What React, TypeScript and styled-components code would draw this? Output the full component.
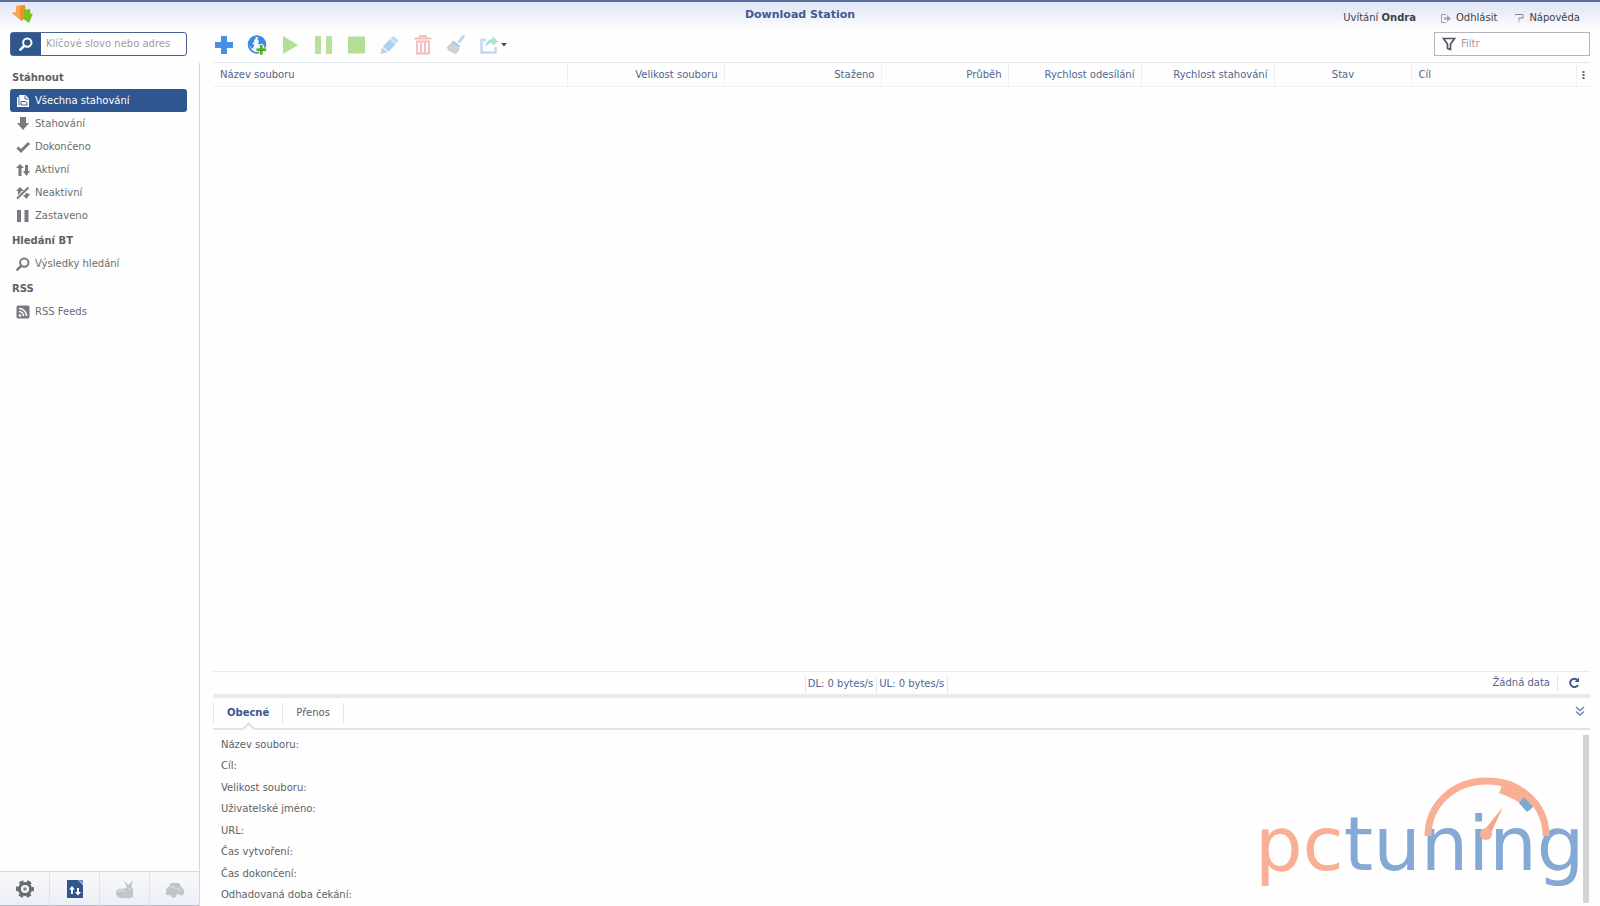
import React, { useState } from 'react';
import styled, { createGlobalStyle, css } from 'styled-components';

const GlobalStyle = createGlobalStyle`
  * { box-sizing: border-box; }
  body {
    margin: 0;
    background: #fefefe;
    color: #5e6166;
    font: 10px/16px "DejaVu Sans", Verdana, sans-serif;
  }
  button, input, table { font: inherit; color: inherit; }
  button { border: 0; padding: 0; background: none; cursor: pointer; }
  ul, h1, h2, dl, dd { margin: 0; padding: 0; list-style: none; font-size: inherit; }
  svg { display: block; flex: none; }
`;

const Page = styled.div`
  display: flex;
  flex-direction: column;
  min-height: 100vh;
  border-top: 2px solid #5c6c98;
  background: linear-gradient(#dfe8f8 0, #e9edf6 10px, #fefefe 28px);
`;

const TopBar = styled.header`
  display: grid;
  grid-template-columns: 1fr auto 1fr;
  height: 30px;
  padding: 0 10px;
`;

const Title = styled.h1`
  padding-top: 5px;
  font-size: 11px;
  font-weight: bold;
  color: #3f5b8f;
`;

const AppIcon = styled.div`
  padding-top: 2px;
`;

const UserLinks = styled.nav`
  display: flex;
  justify-content: flex-end;
  gap: 18px;
  padding: 8px 10px 0 0;
  color: #3e4248;
`;

const Greeting = styled.span`
  padding-right: 6px;
`;

const UserLink = styled.a`
  display: flex;
  align-items: center;
  gap: 5px;
  height: 16px;
  color: inherit;
  text-decoration: none;
`;

const Body = styled.div`
  display: flex;
  flex: 1;
`;

const Sidebar = styled.aside`
  display: flex;
  flex-direction: column;
  flex: 0 0 200px;
  min-width: 0;
`;

const SearchBox = styled.form`
  display: flex;
  height: 24px;
  margin: 0 13px 7px 10px;
  border: 1px solid #4a6391;
  border-radius: 3px;
  background: #fff;
`;

const SearchButton = styled.button`
  display: grid;
  place-items: center;
  width: 30px;
  background: #31578f;
`;

const TextInput = styled.input`
  flex: 1;
  min-width: 0;
  padding: 0 5px;
  border: 0;
  outline: 0;
  background: transparent;
  &::placeholder { color: #9b9da1; opacity: 1; }
`;

const SideContent = styled.div`
  display: flex;
  flex: 1;
  flex-direction: column;
  justify-content: space-between;
  padding-top: 1px;
  border-right: 1px solid #d5d6da;
`;

const NavHeading = styled.h2`
  height: 25px;
  padding-left: 12px;
  line-height: 27px;
  font-weight: bold;
`;

const NavItem = styled.a<{ $active?: boolean }>`
  display: flex;
  align-items: center;
  gap: 5px;
  height: 23px;
  margin: 0 12px 0 10px;
  padding-left: 6px;
  border-radius: 3px;
  color: #696c71;
  text-decoration: none;
  ${p => p.$active && css`
    background: #2f568e;
    color: #fff;
  `}
`;

const ModeBar = styled.div`
  display: flex;
  height: 35px;
  border-top: 1px solid #d4d9e2;
  border-bottom: 1px solid #b9bdc6;
  background: linear-gradient(#f8f9fc, #eceff6);
`;

const ModeButton = styled.button`
  display: grid;
  place-items: center;
  flex: 1;
  & + & { border-left: 1px solid #dfe3ea; }
`;

const Main = styled.main`
  display: flex;
  flex: 1;
  flex-direction: column;
  min-width: 0;
  padding: 0 10px 0 13px;
`;

const Toolbar = styled.div`
  display: flex;
  align-items: center;
  gap: 11px;
  height: 24px;
  margin-bottom: 6px;
`;

const ToolButton = styled.button<{ $wide?: boolean }>`
  display: flex;
  align-items: center;
  justify-content: center;
  gap: 2px;
  width: ${p => (p.$wide ? 32 : 22)}px;
  height: 24px;
  padding-top: 2px;
`;

const Filter = styled.label`
  display: flex;
  align-items: center;
  width: 156px;
  height: 24px;
  margin-left: auto;
  padding-left: 7px;
  border: 1px solid #b2b4b8;
  background: #fff;
`;

const Grid = styled.table`
  width: 100%;
  table-layout: fixed;
  border-collapse: collapse;
  border-top: 1px solid #e3e8ee;
  border-bottom: 1px solid #eef0f2;
`;

const HeadCell = styled.th<{ $align?: string }>`
  height: 24px;
  padding: 0 6px 0 7px;
  text-align: ${p => p.$align ?? 'left'};
  font-weight: normal;
  color: #50668f;
  & + & { border-left: 1px solid #edeff2; }
  &:last-child { padding: 0; }
`;

const MoreButton = styled.button`
  display: block;
  margin: 0 auto;
`;

const StatusBar = styled.footer`
  display: grid;
  grid-template-columns: 1fr auto 1fr 50px;
  height: 23px;
  margin-top: auto;
  border-top: 1px solid #eaebee;
  color: #50668f;
`;

const Rates = styled.div`
  display: flex;
  grid-column: 2;
  padding: 4px 0 1px;
`;

const Rate = styled.span`
  padding: 0 3px 0 2px;
  border-left: 1px solid #e6e7ea;
  &:last-child { border-right: 1px solid #e6e7ea; }
`;

const Summary = styled.div`
  display: flex;
  grid-column: 3 / 5;
  justify-content: flex-end;
  align-items: center;
  gap: 7px;
  padding: 0 10px 1px 0;
`;

const RefreshButton = styled.button`
  height: 16px;
  padding-left: 10px;
  border-left: 1px solid #e6e7ea;
`;

const Splitter = styled.div`
  height: 4px;
  background: #e9eaee;
`;

const Tabs = styled.div`
  display: flex;
  align-items: flex-start;
  height: 32px;
  padding-top: 5px;
  border-bottom: 2px solid #e2e3e6;
`;

const Tab = styled.button<{ $active?: boolean }>`
  position: relative;
  height: 20px;
  padding: 0 13px;
  border-right: 1px solid #e2e3e6;
  &:first-child { border-left: 1px solid #e2e3e6; }
  ${p => p.$active && css`
    font-weight: bold;
    color: #36578f;
    &::after {
      content: "";
      position: absolute;
      left: 50%;
      top: 21px;
      width: 7px;
      height: 7px;
      margin-left: -4px;
      background: #fefefe;
      border: 2px solid #dfe0e4;
      border-right: 0;
      border-bottom: 0;
      transform: rotate(45deg);
    }
  `}
`;

const Collapse = styled.button`
  margin: 3px 5px 0 auto;
`;

const Details = styled.section`
  position: relative;
  display: flex;
  justify-content: space-between;
  height: 176px;
  padding: 4px 0 0 8px;
`;

const Fields = styled.dl`
  display: grid;
  grid-template-rows: repeat(8, 1fr);
  align-items: center;
`;

const ScrollTrack = styled.div`
  width: 6px;
  margin: 1px 1px 3px 0;
  background: #d3d3d4;
`;

const Watermark = styled.svg`
  position: absolute;
  right: -10px;
  bottom: 0;
`;

type IconProps = { w?: number; h?: number; children: React.ReactNode };
const Icon = ({ w = 14, h = 14, children }: IconProps) => (
  <svg width={w} height={h} viewBox={`0 0 ${w} ${h}`} aria-hidden="true">{children}</svg>
);

const GREY = '#777a80';

const Magnifier = ({ color }: { color: string }) => (
  <Icon>
    <circle cx="8.3" cy="5.6" r="4.2" fill="none" stroke={color} strokeWidth="2" />
    <path d="M5.2 8.8 1.4 12.6" stroke={color} strokeWidth="2.6" strokeLinecap="round" />
  </Icon>
);

const navIcons: Record<string, React.ReactNode> = {
  all: <Icon><path d="M1 3h2V1h6.500L13 4.500V13H1z" fill="#fff" /><path d="M3 3v8.500M5 7.500h4.500l1.500 1V11H5zM9 1.500V5h3.500" fill="none" stroke="#2f568e" strokeWidth=".9" /></Icon>,
  down: <Icon><path d="M4 0h6v6h3L7 13 1 6h3z" fill={GREY} /></Icon>,
  done: <Icon><path d="M1.500 7.500 5 11l8-8" fill="none" stroke={GREY} strokeWidth="3" /></Icon>,
  active: <Icon><path d="M4 1 0 5h2.500v8h3V5H8zM9 2h3v6h2l-3.500 5L7 8h2z" fill={GREY} /></Icon>,
  inactive: <Icon><path d="M4 1 0 5h2v4l3-3V5h3zM10 7h2v1h2l-3.500 5L7 9h2z" fill={GREY} /><path d="M1 12.500 12.500 1.500" stroke={GREY} strokeWidth="2" /></Icon>,
  paused: <Icon><path d="M1 1h4v12H1zM8.500 1h4v12h-4z" fill={GREY} /></Icon>,
  search: <Magnifier color={GREY} />,
  rss: <Icon><rect x=".5" y=".5" width="13" height="13" rx="1.500" fill={GREY} /><circle cx="4" cy="10.500" r="1.300" fill="#fff" /><path d="M3 6.500a4.500 4.500 0 0 1 4.500 4.500M3 3.500A7.500 7.500 0 0 1 10.500 11" fill="none" stroke="#fff" strokeWidth="1.500" /></Icon>,
};

const navGroups = [
  { title: 'Stáhnout', items: [['all', 'Všechna stahování'], ['down', 'Stahování'], ['done', 'Dokončeno'], ['active', 'Aktivní'], ['inactive', 'Neaktivní'], ['paused', 'Zastaveno']] },
  { title: 'Hledání BT', items: [['search', 'Výsledky hledání']] },
  { title: 'RSS', items: [['rss', 'RSS Feeds']] },
];

const tools = [
  { label: 'Přidat', icon: <Icon w={20} h={20}><path d="M7 1h6v6h6v6h-6v6H7v-6H1V7h6z" fill="#4690e8" /></Icon> },
  { label: 'Přidat z URL', icon: (
    <Icon w={20} h={20}>
      <circle cx="10" cy="9.500" r="8.400" fill="#eef6fe" stroke="#3f87df" strokeWidth="1.800" />
      <path d="M3 4c2-2 4-2.500 5-2l1 1.500L7 5v2L5 8.500l2 1L6.500 12 5 14l-2-3-1.500-3zM11 2l4 1 2.500 3 1 4-2 .5-1.500-2-2 1.500-2-1.500 1-2.500-1.500-1.500z" fill="#3f87df" />
      <path d="M12.500 9.500H16v3.500h3.500v3.500H16V20h-3.500v-3.500H9V13h3.500z" fill="#55ac1e" stroke="#f5fbf0" strokeWidth=".8" />
    </Icon>) },
  { label: 'Spustit', icon: <Icon w={20} h={20}><path d="M3 1v18l15-9z" fill="#b0e094" /></Icon> },
  { label: 'Pozastavit', icon: <Icon w={20} h={20}><path d="M2 1h6v18H2zM13 1h6v18h-6z" fill="#b8e29c" /></Icon> },
  { label: 'Zastavit', icon: <Icon w={20} h={20}><path d="M2 1.500h17v17H2z" fill="#b4de96" /></Icon> },
  { label: 'Upravit', icon: (
    <Icon w={20} h={20}>
      <path d="m14.500 1 5 4.500-2.500 3-5.500-5z" fill="#bddaf6" />
      <path d="m11 4 5.500 5.200-7 7.500-5.800-5z" fill="#aed0f2" />
      <path d="m3 12.500 5.500 4.800L1.500 19z" fill="#cdced2" />
    </Icon>) },
  { label: 'Smazat', icon: <Icon w={20} h={20}><path d="M8 2.500V1h6v1.500M2.500 3.500h17M5 6.500h12v12H5zM9 7v11M13 7v11" fill="none" stroke="#f3bcbd" strokeWidth="1.800" /></Icon> },
  { label: 'Vyčistit', icon: (
    <Icon w={20} h={20}>
      <path d="m19 .5-5.500 7" stroke="#bcd9f0" strokeWidth="3" />
      <path d="m8.500 5.500 7 5.500-1.500 2-8-5z" fill="#b0cde6" />
      <path d="m6.500 7.500 8 6-1.500 3.500-3.500 2.500-1-2-1.500 1-1.500-2.500-2 .5-.5-2.500-2-1z" fill="#d0d1d4" />
    </Icon>) },
  { label: 'Sdílet', wide: true, icon: (
    <>
      <Icon w={20} h={20}>
        <path d="M7 5H2.500v12.500h14V12" fill="none" stroke="#bfdbf2" strokeWidth="2.500" />
        <path d="M6.500 12c0-5 3-8 7-8V1L19 6.500 13.500 11V8c-3 0-5 1.500-7 4z" fill="#b0dfd4" />
      </Icon>
      <Icon w={6} h={4}><path d="M0 0h6L3 3.500z" fill="#4a4c50" /></Icon>
    </>) },
];

const columns: { label: string; align?: string; width?: number }[] = [
  { label: 'Název souboru' },
  { label: 'Velikost souboru', align: 'right', width: 157 },
  { label: 'Staženo', align: 'right', width: 157 },
  { label: 'Průběh', align: 'right', width: 127 },
  { label: 'Rychlost odesílání', align: 'right', width: 133 },
  { label: 'Rychlost stahování', align: 'right', width: 133 },
  { label: 'Stav', align: 'center', width: 137 },
  { label: 'Cíl', width: 165 },
];

const fields = ['Název souboru:', 'Cíl:', 'Velikost souboru:', 'Uživatelské jméno:', 'URL:', 'Čas vytvoření:', 'Čas dokončení:', 'Odhadovaná doba čekání:'];

const modes = [
  { label: 'Nastavení', icon: (
    <Icon w={20} h={20}>
      <circle cx="10" cy="10" r="5.600" fill="none" stroke="#676a71" strokeWidth="3" />
      <circle cx="10" cy="10" r="7.800" fill="none" stroke="#676a71" strokeWidth="2.400" strokeDasharray="4.500 3.668" strokeDashoffset="2.250" />
      <circle cx="10" cy="10" r="1.800" fill="#85888f" />
    </Icon>) },
  { label: 'Stahování', icon: (
    <Icon w={18} h={20}>
      <path d="M1 1h11l5 5v13H1z" fill="#31568f" /><path d="M12.500 1H17v4z" fill="#6f8ab5" />
      <path d="M6 7 3 10.500h2V15h2v-4.500h2zM11 9h2v4h2l-3 3.500L9 13h2z" fill="#fff" />
    </Icon>) },
  { label: 'eMule', icon: (
    <Icon w={20} h={20}>
      <path d="M1 14c0-3 3-5 6-4l4-1 1-1-3-6 4.500 4L18 1l-1.500 6 1.500 3v8c-2 1.500-7 1.500-10 1-3 .5-7-1-7-5z" fill="#c1c4ca" />
      <path d="M3 12.500c3-2 6-1 7 1M13.500 9l2 2.500" fill="none" stroke="#e7e9ee" />
    </Icon>) },
  { label: 'Plánovač', icon: (
    <Icon w={20} h={20}>
      <path d="M1 12c0-3 2-4 3-4 0-3 3-5 6-4 3-1 6 1 6 4 2 1 4 4 3 7l-3 2-2-2-3 1v2l-3 1-3-3-4 0z" fill="#c1c4ca" />
      <path d="M6 8c2-1 4 0 4 2M12 9l3 3" fill="none" stroke="#e7e9ee" />
    </Icon>) },
];

const Gauge = () => (
  <Watermark width="360" height="146" viewBox="0 0 360 146" role="img" aria-label="pctuning">
    <text x="15" y="110" fontFamily="DejaVu Sans, sans-serif" fontSize="75" fill="#84a9d4"><tspan fill="#f8af93">pc</tspan>tuning</text>
    <path d="M188 76C188 46 212 21 247 21s59 25 59 55" fill="none" stroke="#f8af93" strokeWidth="7" />
    <path d="m263 23-4 10c8 3 15 6 21 10l9 8 7-8c-8-10-18-17-33-20z" fill="#f8af93" />
    <path d="m284 37 9 10-6 5-8-9z" fill="#7fa9d4" />
    <path d="m263 47-14 30-7-4z" fill="#f3a68c" />
    <circle cx="246" cy="74" r="6" fill="#f8af93" />
  </Watermark>
);

export default function App() {
  const [active, setActive] = useState('all');
  const [tab, setTab] = useState('Obecné');
  return (
    <>
      <GlobalStyle />
      <Page>
        <TopBar>
          <AppIcon>
            <Icon w={24} h={20}>
              <path d="m6 2 9-1 1 8 3-1-7 9L2 9l4-1z" fill="#f08f2c" />
              <path d="m6 2 4-.5V14L2 9l4-1z" fill="#f6a94e" />
              <path d="m14 6 6-1 .500 5 2.500-.500L19 19l-7-5 2-.500z" fill="#7ac21c" />
            </Icon>
          </AppIcon>
          <Title>Download Station</Title>
          <UserLinks aria-label="Uživatel">
            <Greeting>Uvítání <b>Ondra</b></Greeting>
            <UserLink href="#logout">
              <Icon w={11} h={11}><path d="M6 1.500H1.500v8H6" fill="none" stroke="#a1a4a9" /><path d="M4 4.500h3V2l4 3.500L7 9V6.500H4z" fill="#a1a4a9" /></Icon>
              Odhlásit
            </UserLink>
            <UserLink href="#help">
              <Icon w={9} h={10}><path d="M0 1.500h8v3.500H4v2.500M4 8.500v1" fill="none" stroke="#85888d" /></Icon>
              Nápověda
            </UserLink>
          </UserLinks>
        </TopBar>
        <Body>
          <Sidebar>
            <SearchBox onSubmit={e => e.preventDefault()}>
              <SearchButton aria-label="Hledat"><Magnifier color="#fff" /></SearchButton>
              <TextInput aria-label="Hledat" placeholder="Klíčové slovo nebo adres" />
            </SearchBox>
            <SideContent>
              <nav>
                {navGroups.map(g => (
                  <section key={g.title}>
                    <NavHeading>{g.title}</NavHeading>
                    <ul>
                      {g.items.map(([id, label]) => (
                        <li key={id}>
                          <NavItem href={`#${id}`} $active={id === active} onClick={() => setActive(id)}>
                            {navIcons[id]}{label}
                          </NavItem>
                        </li>
                      ))}
                    </ul>
                  </section>
                ))}
              </nav>
              <ModeBar>
                {modes.map(m => <ModeButton key={m.label} aria-label={m.label}>{m.icon}</ModeButton>)}
              </ModeBar>
            </SideContent>
          </Sidebar>
          <Main>
            <Toolbar>
              {tools.map(t => <ToolButton key={t.label} aria-label={t.label} $wide={t.wide}>{t.icon}</ToolButton>)}
              <Filter>
                <Icon><path d="M1.500 1.500h11L8.500 7v5.500l-3-1V7z" fill="none" stroke="#4f5560" strokeWidth="1.700" /></Icon>
                <TextInput aria-label="Filtr" placeholder="Filtr" />
              </Filter>
            </Toolbar>
            <Grid>
              <colgroup>
                {columns.map(c => <col key={c.label} width={c.width} />)}
                <col width={14} />
              </colgroup>
              <thead>
                <tr>
                  {columns.map(c => <HeadCell key={c.label} $align={c.align}>{c.label}</HeadCell>)}
                  <HeadCell>
                    <MoreButton aria-label="Sloupce"><Icon w={3} h={8}><path d="M.5 0h2v2h-2zM.5 3h2v2h-2zM.5 6h2v2h-2z" fill="#50668f" /></Icon></MoreButton>
                  </HeadCell>
                </tr>
              </thead>
            </Grid>
            <StatusBar>
              <Rates><Rate>DL: 0 bytes/s</Rate><Rate>UL: 0 bytes/s</Rate></Rates>
              <Summary>
                Žádná data
                <RefreshButton aria-label="Obnovit">
                  <Icon w={12} h={12}><path d="M9.500 3A4.200 4.200 0 1 0 10 8" fill="none" stroke="#3f5a8b" strokeWidth="2" /><path d="M11 .5V5H6.500z" fill="#3f5a8b" /></Icon>
                </RefreshButton>
              </Summary>
            </StatusBar>
            <Splitter />
            <Tabs role="tablist">
              {['Obecné', 'Přenos'].map(t => (
                <Tab key={t} role="tab" aria-selected={t === tab} $active={t === tab} onClick={() => setTab(t)}>{t}</Tab>
              ))}
              <Collapse aria-label="Sbalit">
                <Icon w={10} h={10}><path d="m1 1 4 3.500L9 1M1 5.500 5 9l4-3.500" fill="none" stroke="#6d82ab" strokeWidth="1.500" /></Icon>
              </Collapse>
            </Tabs>
            <Details>
              <Fields>{fields.map(f => <dt key={f}>{f}</dt>)}</Fields>
              <ScrollTrack />
              <Gauge />
            </Details>
          </Main>
        </Body>
      </Page>
    </>
  );
}
